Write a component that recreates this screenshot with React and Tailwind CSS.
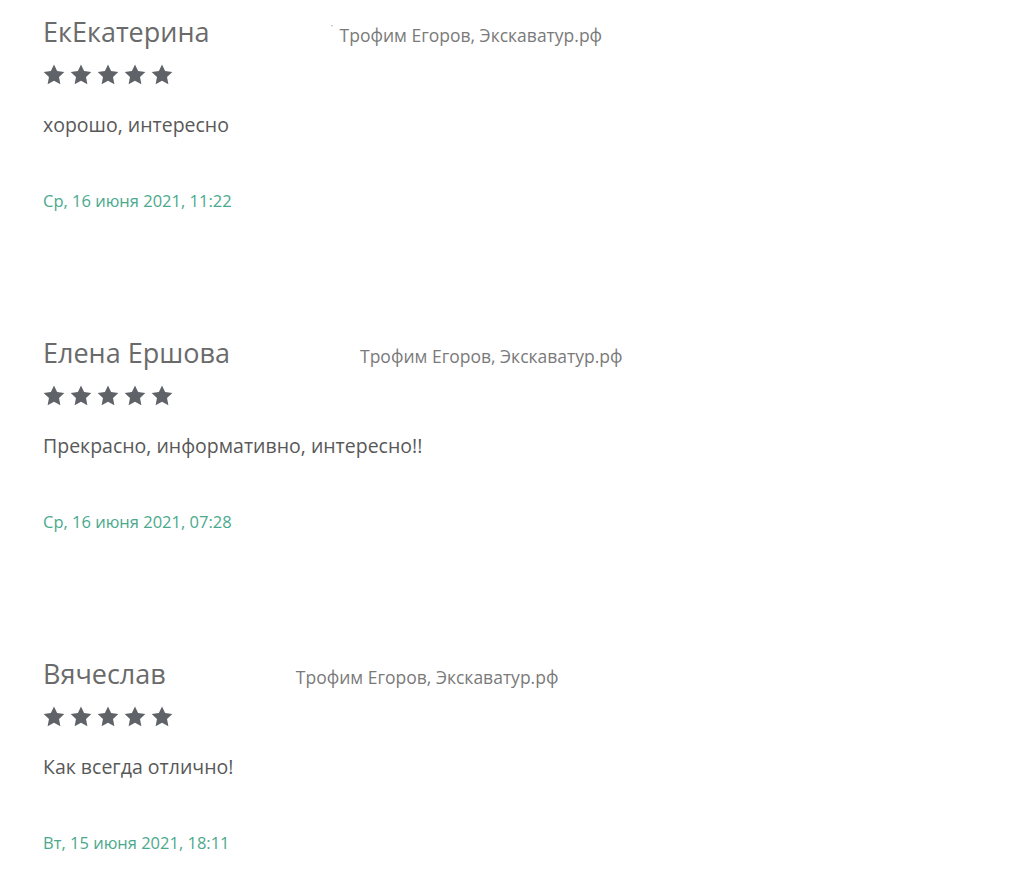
const reviews=[
    {name:"ЕкЕкатерина",lead:true,text:"хорошо, интересно",date:"Ср, 16 июня 2021, 11:22"},
    {name:"Елена Ершова",lead:false,text:"Прекрасно, информативно, интересно!!",date:"Ср, 16 июня 2021, 07:28"},
    {name:"Вячеслав",lead:false,text:"Как всегда отлично!",date:"Вт, 15 июня 2021, 18:11"},
];

const Star=()=>(
    <svg width="22" height="21" viewBox="0 0 24 23" className="fill-[#5f6368]">
        <path d="M12 0.6l3.4 7.2 7.9 1-5.8 5.5 1.5 7.8L12 18.3l-7 3.8 1.5-7.8L0.7 8.8l7.9-1z"/>
    </svg>
)

const App=()=>{
    return(
        <div className="w-[1033px] h-[872px] overflow-hidden bg-white pl-[43px] pt-[14px]" style={{fontFamily:"'Open Sans', sans-serif"}}>
            {reviews.map((item,index)=>{
                return(
                <div className="flex flex-col mb-[122px]" key={index}>
                    {/* Header */}
                    <div className="flex items-baseline h-[36px]">
                        <p className="text-[27px] leading-[36px] text-[#6a6a6a]">{item.name}</p>
                        <p className="ml-[130px] text-[17.5px] text-[#7a7a7a] relative">
                            {item.lead&&<span className="absolute left-[-9px] top-[-4px] text-[10px] text-[#999]">·</span>}
                            Трофим Егоров, Экскаватур.рф
                        </p>
                    </div>
                    {/* Stars */}
                    <div className="flex gap-[5px] mt-[14px] h-[21px]">
                        <Star/><Star/><Star/><Star/><Star/>
                    </div>
                    <p className="mt-[26px] text-[19.5px] leading-[28px] text-[#585858]">{item.text}</p>
                    <p className="mt-[50px] text-[16.5px] leading-[24px] text-[#4aa98c]">{item.date}</p>
                </div>
                )
            })}
        </div>
    )
}

export default App;
